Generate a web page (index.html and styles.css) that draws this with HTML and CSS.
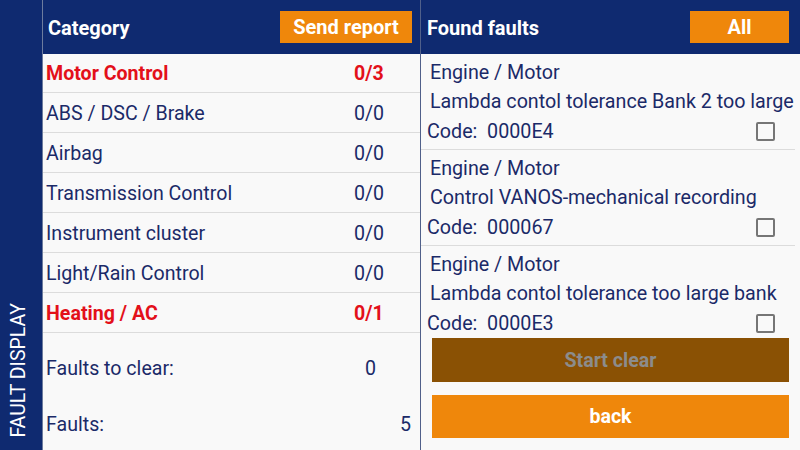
FILE: index.html
```
<!DOCTYPE html>
<html>
<head>
<meta charset="utf-8">
<link rel="stylesheet" href="styles.css">
</head>
<body>
<div class="app">
  <aside class="sidebar"><span class="side-title">FAULT DISPLAY</span></aside>
  <div class="main">
    <section class="panel left">
      <header class="head">
        <span class="head-title">Category</span>
        <span class="btn btn-send">Send report</span>
      </header>
      <ul class="cats">
        <li class="cat alert"><span>Motor Control</span><span class="val">0/3</span></li>
        <li class="cat"><span>ABS / DSC / Brake</span><span class="val">0/0</span></li>
        <li class="cat"><span>Airbag</span><span class="val">0/0</span></li>
        <li class="cat"><span>Transmission Control</span><span class="val">0/0</span></li>
        <li class="cat"><span>Instrument cluster</span><span class="val">0/0</span></li>
        <li class="cat"><span>Light/Rain Control</span><span class="val">0/0</span></li>
        <li class="cat alert"><span>Heating / AC</span><span class="val">0/1</span></li>
      </ul>
      <div class="summary">
        <div class="sum-row sum-clear"><span>Faults to clear:</span><span>0</span></div>
        <div class="sum-row sum-total"><span>Faults:</span><span>5</span></div>
      </div>
    </section>
    <section class="panel right">
      <header class="head head-right">
        <span class="head-title">Found faults</span>
        <span class="btn btn-all">All</span>
      </header>
      <div class="faults">
        <div class="fault">
          <div class="f-cat">Engine / Motor</div>
          <div class="f-desc">Lambda contol tolerance Bank 2 too large</div>
          <div class="f-code"><span class="code">Code:  0000E4</span><span class="check"></span></div>
        </div>
        <div class="fault">
          <div class="f-cat">Engine / Motor</div>
          <div class="f-desc">Control VANOS-mechanical recording</div>
          <div class="f-code"><span class="code">Code:  000067</span><span class="check"></span></div>
        </div>
        <div class="fault">
          <div class="f-cat">Engine / Motor</div>
          <div class="f-desc">Lambda contol tolerance too large bank</div>
          <div class="f-code"><span class="code">Code:  0000E3</span><span class="check"></span></div>
        </div>
      </div>
      <div class="actions">
        <div class="action action-clear">Start clear</div>
        <div class="action action-back">back</div>
      </div>
    </section>
  </div>
</div>
</body>
</html>
```
FILE: styles.css
```
* { box-sizing: border-box; }
html, body { margin: 0; padding: 0; }
body {
  width: 800px;
  height: 450px;
  overflow: hidden;
  font-family: Roboto, "Liberation Sans", sans-serif;
  color: #1b2a68;
  background: #f9f9f9;
}
ul { list-style: none; margin: 0; padding: 0; }

.app { display: flex; width: 800px; height: 450px; }

.sidebar {
  width: 43px;
  flex: none;
  background: #0f2a70;
  border-right: 1px solid #6d7c9e;
  display: flex;
  flex-direction: column;
  justify-content: flex-end;
  align-items: center;
  padding: 0 5px 12px 0;
}
.side-title {
  writing-mode: vertical-rl;
  transform: rotate(180deg);
  color: #fff;
  font-size: 19.5px;
  line-height: 1;
  white-space: nowrap;
}

.main { flex: 1; display: flex; }
.panel { display: flex; flex-direction: column; }
.left { width: 378px; flex: none; border-right: 1px solid #50608a; }
.right { flex: 1; }

.head {
  height: 54px;
  flex: none;
  background: #0f2a70;
  display: flex;
  align-items: center;
  justify-content: space-between;
  padding: 0 8px 0 5px;
}
.head-right { padding: 0 11px 0 6px; }
.head-title { color: #fff; font-weight: 700; font-size: 20px; padding-top: 2px; }
.btn {
  background: #ef870b;
  color: #fff;
  font-weight: 700;
  font-size: 20px;
  height: 32px;
  display: flex;
  align-items: center;
  justify-content: center;
}
.btn-send { width: 132px; }
.btn-all { width: 99px; }

.cats { flex: none; }
.cat {
  height: 40px;
  border-bottom: 1px solid #dcdcdc;
  display: flex;
  align-items: center;
  padding-left: 3px;
  padding-top: 1px;
  font-size: 19.6px;
}
.cat:first-child { height: 39px; }
.cat span:first-child { flex: 1; }
.cat .val { width: 66px; }
.cat.alert { color: #e3101a; font-weight: 700; }

.summary { padding-top: 7px; }
.sum-row {
  height: 56px;
  display: flex;
  align-items: center;
  justify-content: space-between;
  padding-left: 3px;
  font-size: 19.6px;
}
.sum-clear { padding-right: 44px; }
.sum-total { padding-right: 9px; }

.faults { flex: 1; overflow: hidden; padding-right: 5px; }
.fault {
  height: 96px;
  border-bottom: 1px solid #dcdcdc;
  padding-top: 5px;
  font-size: 19.7px;
}
.f-cat { height: 26px; display: flex; align-items: center; padding-left: 9px; }
.f-desc { height: 32px; display: flex; align-items: center; padding-left: 9px; white-space: nowrap; }
.f-code { height: 28px; display: flex; align-items: center; justify-content: space-between; padding-left: 6px; padding-right: 20px; }
.code { white-space: pre; }
.check {
  width: 19px;
  height: 19px;
  border: 2px solid #767676;
  border-radius: 2px;
}

.actions {
  flex: none;
  display: flex;
  flex-direction: column;
  gap: 13px;
  padding: 0 11px 12px 11px;
}
.action {
  height: 44px;
  display: flex;
  align-items: center;
  justify-content: center;
  font-weight: 700;
  font-size: 19.6px;
}
.action-clear { background: #8a5104; color: #8c8c8c; }
.action-back { background: #ef870b; color: #fff; height: 43px; }
```
